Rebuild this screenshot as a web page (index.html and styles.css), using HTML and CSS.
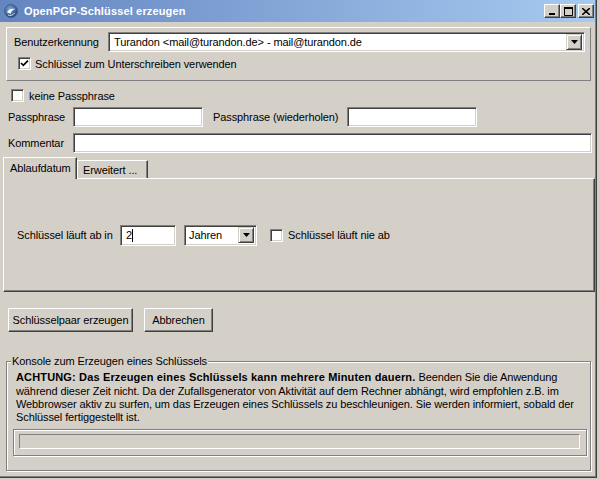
FILE: index.html
```html
<!DOCTYPE html>
<html lang="de">
<head>
<meta charset="utf-8">
<title>OpenPGP-Schlüssel erzeugen</title>
<link rel="stylesheet" href="styles.css">
</head>
<body>
<div class="desktop">
  <div class="window">
    <div class="titlebar">
      <svg class="appicon" width="14" height="14" viewBox="0 0 14 14">
        <defs>
          <radialGradient id="g" cx="0.4" cy="0.35" r="0.7">
            <stop offset="0" stop-color="#7fa6d6"/>
            <stop offset="1" stop-color="#1d3f74"/>
          </radialGradient>
        </defs>
        <circle cx="7" cy="7" r="6.5" fill="url(#g)" stroke="#3c5a86" stroke-width="0.8"/>
        <path d="M3 8.5 C4 5 8 4 11.5 5 C9 5.5 7 7 6.5 10 C5.5 9 4.2 8.6 3 8.5 Z" fill="#ffffff"/>
        <path d="M4 11 C6 12 9 11.5 10.5 9" fill="none" stroke="#cfe0f4" stroke-width="1"/>
      </svg>
      <span class="title">OpenPGP-Schlüssel erzeugen</span>
      <div class="caption-buttons">
        <span class="cbtn">
          <svg width="8" height="7" viewBox="0 0 8 7"><rect x="1" y="5" width="6" height="2" fill="#000"/></svg>
        </span>
        <span class="cbtn">
          <svg width="9" height="9" viewBox="0 0 9 9"><path d="M0.5 1.5 H8.5 V8.5 H0.5 Z" fill="none" stroke="#000" stroke-width="1"/><rect x="0" y="0" width="9" height="2" fill="#000"/></svg>
        </span>
        <span class="cbtn cbtn-close">
          <svg width="8" height="7" viewBox="0 0 8 7"><path d="M0 0 L8 7 M8 0 L0 7" stroke="#000" stroke-width="1.6"/></svg>
        </span>
      </div>
    </div>

    <div class="client">
      <div class="user-panel">
        <div class="row">
          <span class="lbl lbl-user">Benutzerkennung</span>
          <div class="combo combo-user">
            <span class="combo-text">Turandon &lt;mail@turandon.de&gt; - mail@turandon.de</span>
            <span class="drop"><svg width="7" height="4" viewBox="0 0 7 4"><path d="M0 0 H7 L3.5 4 Z" fill="#000"/></svg></span>
          </div>
        </div>
        <div class="check-row sign-row">
          <span class="checkbox"><svg width="9" height="9" viewBox="0 0 9 9"><path d="M1 4 L3.3 6.4 L8 1.6" fill="none" stroke="#000" stroke-width="1.7"/></svg></span>
          <span class="lbl">Schlüssel zum Unterschreiben verwenden</span>
        </div>
      </div>

      <div class="check-row nopass-row">
        <span class="checkbox"></span>
        <span class="lbl">keine Passphrase</span>
      </div>

      <div class="row pass-row">
        <span class="lbl lbl-field">Passphrase</span>
        <span class="field field-pass"></span>
        <span class="lbl lbl-repeat">Passphrase (wiederholen)</span>
        <span class="field field-pass"></span>
      </div>

      <div class="row comment-row">
        <span class="lbl lbl-field">Kommentar</span>
        <span class="field field-comment"></span>
      </div>

      <div class="tabs">
        <div class="tabstrip">
          <span class="tab tab-active">Ablaufdatum</span>
          <span class="tab">Erweitert ...</span>
        </div>
        <div class="tabpanel">
          <div class="row expiry-row">
            <span class="lbl lbl-expiry">Schlüssel läuft ab in</span>
            <span class="field field-num"><span class="field-text">2</span><span class="caret"></span></span>
            <div class="combo combo-unit">
              <span class="combo-text">Jahren</span>
              <span class="drop"><svg width="7" height="4" viewBox="0 0 7 4"><path d="M0 0 H7 L3.5 4 Z" fill="#000"/></svg></span>
            </div>
            <span class="checkbox checkbox-never"></span>
            <span class="lbl">Schlüssel läuft nie ab</span>
          </div>
        </div>
      </div>

      <div class="actions">
        <button class="btn btn-create" type="button">Schlüsselpaar erzeugen</button>
        <button class="btn btn-cancel" type="button">Abbrechen</button>
      </div>

      <fieldset class="console">
        <legend>Konsole zum Erzeugen eines Schlüssels</legend>
        <p class="console-text"><b class="warn">ACHTUNG: Das Erzeugen eines Schlüssels kann mehrere Minuten dauern.</b> Beenden Sie die Anwendung<br>während dieser Zeit nicht. Da der Zufallsgenerator von Aktivität auf dem Rechner abhängt, wird empfohlen z.B. im<br>Webbrowser aktiv zu surfen, um das Erzeugen eines Schlüssels zu beschleunigen. Sie werden informiert, sobald der<br>Schlüssel fertiggestellt ist.</p>
        <div class="progress-frame"><div class="progress"></div></div>
      </fieldset>
    </div>
  </div>
</div>
</body>
</html>
```

FILE: styles.css
```css
* { box-sizing: border-box; }

html, body {
  margin: 0;
  padding: 0;
  background: #d4d0c8;
  overflow: hidden;
}

body {
  font-family: "Liberation Sans", Arial, sans-serif;
  font-size: 11px;
  letter-spacing: -0.1px;
  color: #000;
}

.desktop {
  width: 600px;
  height: 480px;
  display: flex;
}

.window {
  width: 597px;
  height: 478px;
  background: #d4d0c8;
  border-right: 1px solid #404040;
  border-bottom: 1px solid #404040;
  box-shadow: inset -1px -1px 0 #808080;
  padding-right: 1px;
  display: flex;
  flex-direction: column;
}

/* Title bar */
.titlebar {
  height: 22px;
  flex: none;
  display: flex;
  align-items: center;
  padding: 0 1px 0 4px;
  background: linear-gradient(to right, #6485c0, #a6caf0);
}

.appicon { flex: none; margin-right: 6px; }

.title {
  color: #fff;
  font-weight: bold;
  font-size: 11px;
  letter-spacing: 0.15px;
  flex: 1;
  white-space: nowrap;
}

.caption-buttons {
  display: flex;
  align-items: center;
}

.cbtn {
  width: 16px;
  height: 14px;
  display: flex;
  align-items: center;
  justify-content: center;
  background: #d4d0c8;
  border: 1px solid;
  border-color: #fff #404040 #404040 #fff;
  box-shadow: inset -1px -1px 0 #808080;
}

.cbtn-close { margin-left: 2px; }

/* Generic */
.client {
  flex: 1;
  display: flex;
  flex-direction: column;
}

.row {
  display: flex;
  align-items: center;
}

.lbl { white-space: nowrap; }

.field {
  display: flex;
  align-items: center;
  height: 20px;
  background: #fff;
  border: 1px solid;
  border-color: #808080 #fff #fff #808080;
  box-shadow: inset 1px 1px 0 #404040, inset -1px -1px 0 #d4d0c8;
}

.checkbox {
  flex: none;
  width: 13px;
  height: 13px;
  display: flex;
  align-items: center;
  justify-content: center;
  background: #fff;
  border: 1px solid;
  border-color: #808080 #fff #fff #808080;
  box-shadow: inset 1px 1px 0 #404040, inset -1px -1px 0 #d4d0c8;
}

.check-row {
  display: flex;
  align-items: center;
  gap: 5px;
}

.combo {
  display: flex;
  align-items: center;
  height: 20px;
  background: #fff;
  border: 1px solid;
  border-color: #808080 #fff #fff #808080;
  box-shadow: inset 1px 1px 0 #404040, inset -1px -1px 0 #d4d0c8;
  padding: 2px;
}

.combo-text {
  flex: 1;
  padding-left: 3px;
  white-space: nowrap;
}

.drop {
  flex: none;
  width: 16px;
  height: 16px;
  display: flex;
  align-items: center;
  justify-content: center;
  background: #d4d0c8;
  border: 1px solid;
  border-color: #d4d0c8 #404040 #404040 #d4d0c8;
  box-shadow: inset 1px 1px 0 #fff, inset -1px -1px 0 #808080;
}

/* User panel */
.user-panel {
  height: 54px;
  margin: 5px 4px 0 6px;
  padding: 4px 5px 0 7px;
  border: 1px solid;
  border-color: #fff #808080 #808080 #fff;
}

.lbl-user { width: 94px; flex: none; }

.combo-user { flex: 1; }

.sign-row {
  margin: 5px 0 0 4px;
  gap: 4px;
}

/* No passphrase */
.nopass-row {
  margin: 8px 0 0 11px;
}

/* Passphrase fields */
.pass-row { margin: 5px 0 0 8px; }

.lbl-field { width: 65px; flex: none; }

.field-pass { width: 130px; flex: none; }

.lbl-repeat { margin-left: 10px; width: 134px; flex: none; }

.comment-row { margin: 6px 3px 0 8px; }

.field-comment { flex: 1; }

/* Tabs */
.tabs {
  margin: 4px 0 0 3px;
}

.tabstrip {
  display: flex;
  align-items: flex-end;
  height: 21px;
}

.tab {
  height: 18px;
  display: flex;
  align-items: center;
  padding: 0 6px 0 5px;
  border: 1px solid;
  border-bottom: none;
  border-color: #fff #404040 #404040 #fff;
  box-shadow: inset -1px 0 0 #808080;
  white-space: nowrap;
}

.tab-active {
  position: relative;
  z-index: 1;
  height: 22px;
  margin-bottom: -1px;
  padding: 0 6px 2px 6px;
  width: 74px;
  background: #d4d0c8;
}

.tab + .tab { width: 71px; }

.tabpanel {
  height: 114px;
  border: 1px solid;
  border-color: #fff #404040 #404040 #fff;
  box-shadow: inset -1px -1px 0 #808080;
  display: flex;
  align-items: center;
  padding-left: 13px;
}

.expiry-row { flex: 1; }

.lbl-expiry { width: 103px; flex: none; }

.field-num {
  width: 56px;
  height: 21px;
  padding-left: 5px;
}

.caret {
  width: 1px;
  height: 13px;
  background: #000;
}

.combo-unit {
  width: 73px;
  height: 21px;
  margin-left: 8px;
}

.combo-unit .combo-text { padding-left: 2px; }

.checkbox-never { margin: 0 5px 0 13px; }

/* Buttons */
.actions {
  display: flex;
  margin: 16px 0 0 8px;
}

.btn {
  height: 24px;
  font: inherit;
  letter-spacing: inherit;
  color: #000;
  background: #d4d0c8;
  border: 1px solid;
  border-color: #fff #404040 #404040 #fff;
  box-shadow: inset -1px -1px 0 #808080;
  padding: 0;
  border-radius: 0;
}

.btn-create { width: 125px; }

.btn-cancel { width: 69px; margin-left: 11px; }

/* Console group */
.console {
  margin: 23px 4px 0 6px;
  padding: 0 3px 0 0;
  height: 116px;
  border: 1px solid #808080;
  box-shadow: inset 1px 1px 0 #fff, 1px 1px 0 #fff;
  min-width: 0;
}

.console legend {
  margin-left: 4px;
  padding: 0 1px;
  line-height: 13px;
  background: #d4d0c8;
}

.console-text {
  margin: 2px 0 0 9px;
  line-height: 13px;
  white-space: nowrap;
}

.warn { line-height: 15px; letter-spacing: 0.15px; }

.progress-frame {
  margin: 5px 0 0 6px;
  height: 27px;
  padding: 4px 6px 0 5px;
  border: 1px solid #808080;
  box-shadow: inset 1px 1px 0 #fff, 1px 1px 0 #fff;
}

.progress {
  height: 15px;
  border: 1px solid;
  border-color: #808080 #fff #fff #808080;
}
```
